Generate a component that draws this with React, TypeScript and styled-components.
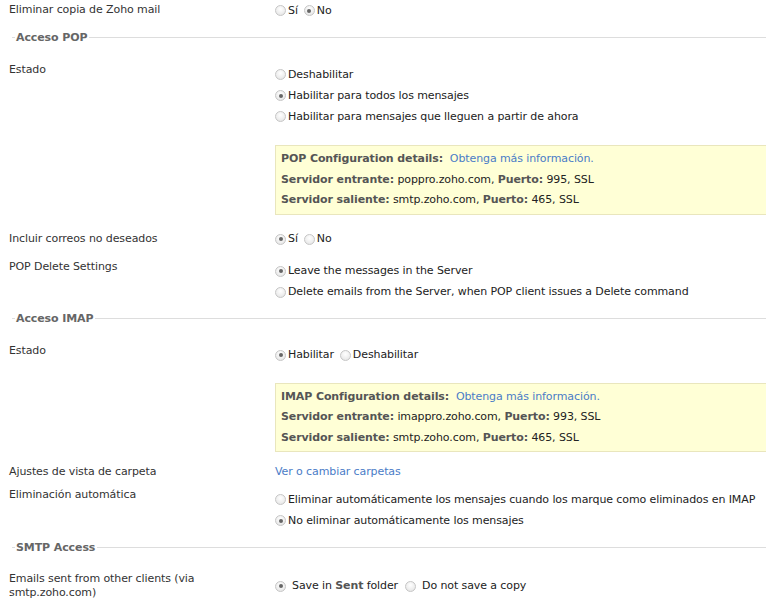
import React from "react";
import styled, { createGlobalStyle } from "styled-components";

const GlobalStyle = createGlobalStyle`
  html, body {
    margin: 0;
    padding: 0;
    background: #ffffff;
  }
  body {
    font-family: "DejaVu Sans", Verdana, sans-serif;
    font-size: 11px;
    letter-spacing: -0.1px;
    color: #333333;
  }
`;

interface RadioOption {
  label: React.ReactNode;
  checked?: boolean;
}

function RadioList(props: {
  options: RadioOption[];
  inline?: boolean;
  wide?: boolean;
  offset?: boolean;
}) {
  const { options, inline, wide, offset } = props;
  return (
    <Options $inline={inline} $wide={wide} $offset={offset}>
      {options.map((o, i) => (
        <Option key={i} $wide={wide}>
          <Radio $checked={o.checked} />
          <span>{o.label}</span>
        </Option>
      ))}
    </Options>
  );
}

function ConfigBox(props: { title: string; incoming: string; port: string }) {
  return (
    <Box>
      <BoxLine>
        <Strong>{props.title}</Strong>&nbsp; <Link>Obtenga más información.</Link>
      </BoxLine>
      <BoxLine>
        <Strong>Servidor entrante:</Strong> {props.incoming}, <Strong>Puerto:</Strong> {props.port}, SSL
      </BoxLine>
      <BoxLine>
        <Strong>Servidor saliente:</Strong> smtp.zoho.com, <Strong>Puerto:</Strong> 465, SSL
      </BoxLine>
    </Box>
  );
}

export default function App() {
  return (
    <>
      <GlobalStyle />
      <Page>
        <Row>
          <Label>Eliminar copia de Zoho mail</Label>
          <RadioList inline options={[{ label: "Sí" }, { label: "No", checked: true }]} />
        </Row>

        <Section>Acceso POP</Section>

        <Row>
          <Label>Estado</Label>
          <RadioList
            offset
            options={[
              { label: "Deshabilitar" },
              { label: "Habilitar para todos los mensajes", checked: true },
              { label: "Habilitar para mensajes que lleguen a partir de ahora" },
            ]}
          />
        </Row>
        <BoxRow $mt={18}>
          <ConfigBox title="POP Configuration details:" incoming="poppro.zoho.com" port="995" />
        </BoxRow>

        <Row $mt={14}>
          <Label>Incluir correos no deseados</Label>
          <RadioList inline options={[{ label: "Sí", checked: true }, { label: "No" }]} />
        </Row>
        <Row $mt={7}>
          <Label>POP Delete Settings</Label>
          <RadioList
            offset
            options={[
              { label: "Leave the messages in the Server", checked: true },
              { label: "Delete emails from the Server, when POP client issues a Delete command" },
            ]}
          />
        </Row>

        <Section $after={6}>Acceso IMAP</Section>

        <Row>
          <Label>Estado</Label>
          <RadioList
            inline
            offset
            options={[{ label: "Habilitar", checked: true }, { label: "Deshabilitar" }]}
          />
        </Row>
        <BoxRow $mt={17}>
          <ConfigBox title="IMAP Configuration details:" incoming="imappro.zoho.com" port="993" />
        </BoxRow>

        <Row $mt={10}>
          <Label>Ajustes de vista de carpeta</Label>
          <Link>Ver o cambiar carpetas</Link>
        </Row>
        <Row $mt={3}>
          <Label>Eliminación automática</Label>
          <RadioList
            offset
            options={[
              { label: "Eliminar automáticamente los mensajes cuando los marque como eliminados en IMAP" },
              { label: "No eliminar automáticamente los mensajes", checked: true },
            ]}
          />
        </Row>

        <Section $after={7}>SMTP Access</Section>

        <Row $center>
          <TwoLineLabel>
            Emails sent from other clients (via
            <br />
            smtp.zoho.com)
          </TwoLineLabel>
          <RadioList
            inline
            wide
            options={[
              {
                label: (
                  <>
                    Save in <Strong>Sent</Strong> folder
                  </>
                ),
                checked: true,
              },
              { label: "Do not save a copy" },
            ]}
          />
        </Row>
      </Page>
    </>
  );
}

const Page = styled.div`
  display: flex;
  flex-direction: column;
  padding: 0 0 0 9px;
  width: 757px;
`;

interface RowProps {
  $mt?: number;
  $center?: boolean;
}

const Row = styled.div<RowProps>`
  display: grid;
  grid-template-columns: 266px 1fr;
  align-items: ${(p) => (p.$center ? "center" : "start")};
  margin-top: ${(p) => p.$mt ?? 0}px;
  line-height: 20px;
`;

const Label = styled.div`
  color: #333333;
  white-space: nowrap;
`;

const TwoLineLabel = styled.div`
  color: #333333;
  line-height: 14px;
  padding: 2px 0;
`;

const Options = styled.div<{ $inline?: boolean; $wide?: boolean; $offset?: boolean }>`
  display: flex;
  flex-direction: ${(p) => (p.$inline ? "row" : "column")};
  gap: ${(p) => (p.$inline ? (p.$wide ? "7px" : "6px") : "0")};
  padding-top: ${(p) => (p.$offset ? "4px" : "0")};
  color: #222222;
`;

const Option = styled.label<{ $wide?: boolean }>`
  display: flex;
  align-items: center;
  gap: ${(p) => (p.$wide ? "6px" : "2px")};
  height: ${(p) => (p.$wide ? "20px" : "21px")};
  white-space: nowrap;
`;

const Radio = styled.span<{ $checked?: boolean }>`
  position: relative;
  box-sizing: border-box;
  width: 11px;
  height: 11px;
  border-radius: 50%;
  border: 1px solid #c6c6c6;
  background: radial-gradient(circle at 50% 35%, #ffffff 0%, #ececec 65%, #dcdcdc 100%);
  flex: none;
  &::after {
    content: "";
    display: ${(p) => (p.$checked ? "block" : "none")};
    position: absolute;
    left: 2.5px;
    top: 2.5px;
    width: 4px;
    height: 4px;
    border-radius: 50%;
    background: #666666;
  }
`;

const Section = styled.div<{ $after?: number }>`
  display: flex;
  align-items: center;
  height: 32px;
  margin-bottom: ${(p) => p.$after ?? 7}px;
  margin-left: 3px;
  font-weight: bold;
  color: #666666;
  &::before {
    content: "";
    width: 3px;
    height: 1px;
    background: #dddddd;
    margin-right: 1px;
  }
  &::after {
    content: "";
    flex: 1;
    height: 1px;
    background: #dddddd;
    margin-left: 2px;
  }
`;

const BoxRow = styled.div<{ $mt?: number }>`
  margin-top: ${(p) => p.$mt ?? 0}px;
  padding-left: 266px;
`;

const Box = styled.div`
  background: #ffffd6;
  border: 1px solid #e9e6bd;
  border-right: none;
  padding: 3px 0 3px 5px;
  color: #222222;
`;

const BoxLine = styled.div`
  line-height: 20.5px;
  white-space: nowrap;
`;

const Strong = styled.b`
  color: #555555;
`;

const Link = styled.span`
  color: #4a7cc7;
  cursor: pointer;
`;
